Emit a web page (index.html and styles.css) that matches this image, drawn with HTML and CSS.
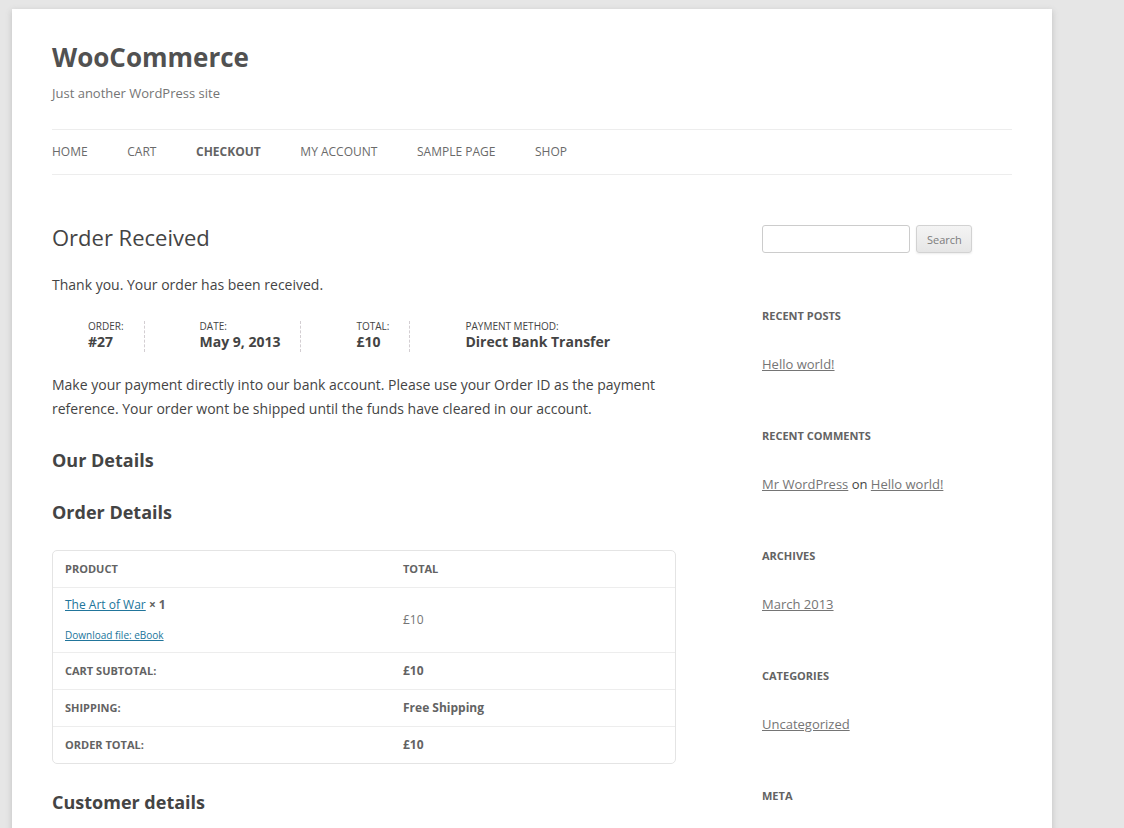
FILE: index.html
```html
<!DOCTYPE html>
<html lang="en">
<head>
<meta charset="utf-8">
<title>Order Received | WooCommerce</title>
<link rel="stylesheet" href="styles.css">
</head>
<body>
<div class="site">
  <header class="site-header">
    <h1 class="site-title">WooCommerce</h1>
    <p class="site-description">Just another WordPress site</p>
    <nav class="main-nav">
      <ul class="nav-menu">
        <li><a href="#">Home</a></li>
        <li><a href="#">Cart</a></li>
        <li class="current"><a href="#">Checkout</a></li>
        <li><a href="#">My Account</a></li>
        <li><a href="#">Sample Page</a></li>
        <li><a href="#">Shop</a></li>
      </ul>
    </nav>
  </header>

  <div class="main">
    <div class="primary">
      <h1 class="entry-title">Order Received</h1>
      <p class="thanks">Thank you. Your order has been received.</p>

      <ul class="order-details">
        <li>Order: <strong>#27</strong></li>
        <li>Date: <strong>May 9, 2013</strong></li>
        <li>Total: <strong>£10</strong></li>
        <li class="last">Payment method: <strong>Direct Bank Transfer</strong></li>
      </ul>

      <p class="bacs">Make your payment directly into our bank account. Please use your Order ID as the payment reference. Your order wont be shipped until the funds have cleared in our account.</p>

      <h2 class="h-our">Our Details</h2>
      <h2 class="h-order">Order Details</h2>

      <table class="shop-table">
        <thead>
          <tr><th class="c1">Product</th><th>Total</th></tr>
        </thead>
        <tbody>
          <tr class="product-row">
            <td class="c1">
              <div class="pname"><a href="#">The Art of War</a> <strong class="qty">× 1</strong></div>
              <div class="dl"><a href="#">Download file: eBook</a></div>
            </td>
            <td class="price">£10</td>
          </tr>
        </tbody>
        <tfoot>
          <tr><th class="c1">Cart Subtotal:</th><td class="strong">£10</td></tr>
          <tr><th class="c1">Shipping:</th><td class="strong">Free Shipping</td></tr>
          <tr><th class="c1">Order Total:</th><td class="strong">£10</td></tr>
        </tfoot>
      </table>

      <h2 class="h-customer">Customer details</h2>
    </div>

    <aside class="sidebar">
      <div class="widget search-widget">
        <form class="search-form">
          <input type="text" class="search-input" aria-label="Search">
          <button type="button" class="search-btn">Search</button>
        </form>
      </div>
      <div class="widget">
        <h3 class="widget-title">Recent Posts</h3>
        <ul><li><a href="#">Hello world!</a></li></ul>
      </div>
      <div class="widget">
        <h3 class="widget-title">Recent Comments</h3>
        <ul><li><a href="#">Mr WordPress</a> on <a href="#">Hello world!</a></li></ul>
      </div>
      <div class="widget">
        <h3 class="widget-title">Archives</h3>
        <ul><li><a href="#">March 2013</a></li></ul>
      </div>
      <div class="widget">
        <h3 class="widget-title">Categories</h3>
        <ul><li><a href="#">Uncategorized</a></li></ul>
      </div>
      <div class="widget">
        <h3 class="widget-title">Meta</h3>
      </div>
    </aside>
  </div>
</div>
</body>
</html>
```

FILE: styles.css
```css
html, body {
  margin: 0;
  padding: 0;
}
body {
  background: #e6e6e6;
  font-family: "Open Sans", "Liberation Sans", sans-serif;
  color: #444;
  font-size: 14px;
  line-height: 24px;
  height: 828px;
  overflow: hidden;
}
a { color: #21759b; }

.site {
  width: 960px;
  margin: 9px 0 0 12px;
  padding: 0 40px 40px;
  background: #fff;
  box-shadow: 0 2px 6px rgba(100, 100, 100, 0.3);
  min-height: 900px;
}

/* Header */
.site-header {
  padding-top: 24px;
}
.site-title {
  margin: 0;
  font-size: 26px;
  line-height: 48px;
  font-weight: bold;
  color: #515151;
}
.site-description {
  margin: 0;
  font-size: 13px;
  line-height: 24px;
  font-weight: normal;
  color: #757575;
}
.main-nav {
  margin-top: 24px;
  border-top: 1px solid #ededed;
  border-bottom: 1px solid #ededed;
}
.nav-menu {
  list-style: none;
  margin: 0;
  padding: 0;
  display: flex;
}
.nav-menu li {
  margin-right: 39.6px;
  font-size: 12px;
  line-height: 44px;
  text-transform: uppercase;
}
.nav-menu a {
  color: #6a6a6a;
  text-decoration: none;
}
.nav-menu .current a {
  color: #636363;
  font-weight: bold;
}

/* Main */
.main {
  display: flex;
  justify-content: space-between;
  padding-top: 50px;
}
.primary {
  width: 625px;
}
.sidebar {
  width: 250px;
}

.entry-title {
  margin: 0 0 24px;
  font-size: 22px;
  line-height: 24px;
  font-weight: normal;
  color: #444;
}
.thanks {
  margin: 0 0 24px;
}

.order-details {
  list-style: none;
  margin: 0 0 21px;
  padding: 0 0 0 36px;
  display: flex;
}
.order-details li {
  flex-shrink: 0;
  white-space: nowrap;
  font-size: 10px;
  line-height: 10px;
  text-transform: uppercase;
  color: #444;
  padding-right: 20px;
  margin-right: 55px;
  border-right: 1px dashed #d3ced2;
}
.order-details li.last {
  border-right: 0;
  margin-right: 0;
}
.order-details strong {
  display: block;
  font-size: 14px;
  line-height: 21px;
  text-transform: none;
}

.bacs {
  margin: 0;
}

h2 {
  font-size: 18px;
  line-height: 24px;
  font-weight: bold;
  color: #444;
}
.h-our { margin: 27px 0 0; }
.h-order { margin: 28px 0 26px; }
.h-customer { margin: 26px 0 0; }

/* Table */
.shop-table {
  width: 624px;
  border: 1px solid #e4e4e4;
  border-radius: 5px;
  border-collapse: separate;
  border-spacing: 0;
  font-size: 12px;
  line-height: 24px;
  text-align: left;
}
.shop-table th,
.shop-table td {
  padding: 6px 12px;
  border-top: 1px solid #ededed;
  vertical-align: middle;
}
.shop-table thead th {
  border-top: 0;
}
.shop-table th {
  font-size: 11px;
  font-weight: bold;
  text-transform: uppercase;
  color: #636363;
}
.shop-table .c1 {
  width: 314px;
}
.shop-table .strong {
  font-weight: bold;
  color: #636363;
}
.product-row td {
  padding: 7px 12px 7px;
}
.pname {
  line-height: 20px;
}
.qty {
  color: #636363;
}
.dl {
  margin-top: 10px;
  font-size: 10px;
  line-height: 20px;
}
.price {
  color: #757575;
}

/* Sidebar */
.widget {
  margin-bottom: 48px;
}
.search-widget {
  margin-bottom: 51px;
}
.search-form {
  display: flex;
  align-items: center;
  gap: 6px;
}
.search-input {
  box-sizing: border-box;
  width: 148px;
  height: 28px;
  margin: 0;
  padding: 6px;
  border: 1px solid #ccc;
  border-radius: 3px;
  background: #fff;
  font-family: inherit;
}
.search-btn {
  box-sizing: border-box;
  width: 56px;
  height: 28px;
  margin: 0;
  padding: 1px 10px 0;
  font-family: "Open Sans", "Liberation Sans", sans-serif;
  font-size: 11px;
  line-height: 26px;
  color: #7c7c7c;
  background: linear-gradient(to bottom, #f4f4f4, #e6e6e6);
  border: 1px solid #d2d2d2;
  border-radius: 3px;
  box-shadow: 0 1px 2px rgba(64, 64, 64, 0.1);
}
.widget-title {
  margin: 0 0 24px;
  font-size: 11px;
  line-height: 24px;
  font-weight: bold;
  text-transform: uppercase;
  color: #636363;
}
.widget ul {
  list-style: none;
  margin: 0;
  padding: 0;
}
.widget li {
  font-size: 13px;
  line-height: 24px;
  color: #444;
}
.widget li a {
  color: #757575;
  text-decoration: underline;
}
```
